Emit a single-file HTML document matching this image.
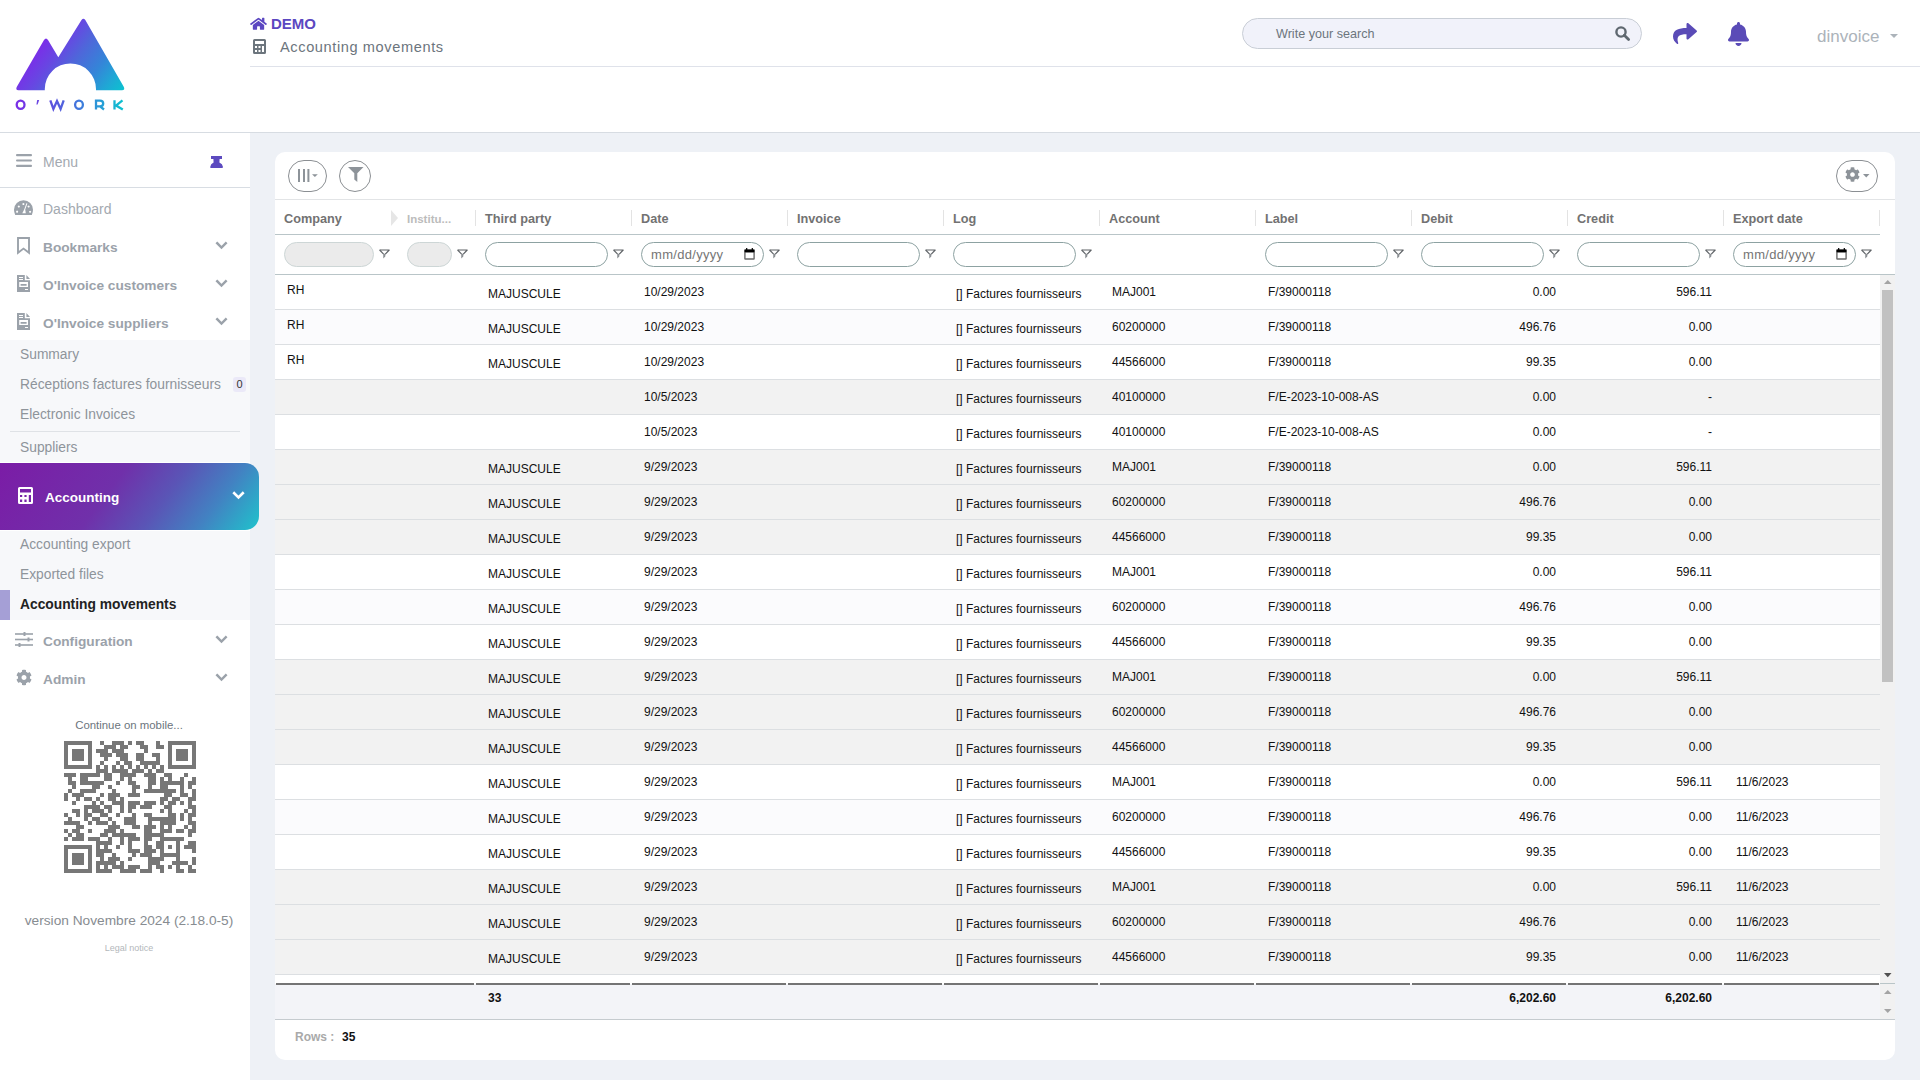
<!DOCTYPE html><html><head><meta charset="utf-8"><title>Accounting movements</title><style>
*{box-sizing:border-box;margin:0;padding:0}
html,body{width:1920px;height:1080px;overflow:hidden;background:#eef1f6;font-family:"Liberation Sans", sans-serif;}
.a{position:absolute;white-space:nowrap}
svg{position:absolute;overflow:visible}
.sb{color:#9ba2aa;font-weight:bold;font-size:13.7px;line-height:16px}
.sub{color:#8e949a;font-size:13.8px;line-height:16px}
.hd{font-weight:bold;font-size:12.7px;line-height:15px;color:#727272}
.sep{position:absolute;width:1px;height:16px;top:210px;background:#e3e3e3}
.inp{position:absolute;top:242px;height:25px;border:1px solid #8da2a2;border-radius:13px;background:#fff}
.inp.dis{background:#ebebeb;border-color:#cdd6d6}
.row{position:absolute;left:275px;width:1605px;height:35px;border-bottom:1px solid #dcdfe2}
.c{position:absolute;font-size:12px;line-height:14px;color:#111;white-space:nowrap}
.r{text-align:right}
</style></head><body>
<div class="a" style="left:0;top:0;width:1920px;height:133px;background:#fff;border-bottom:1px solid #d7dce2"></div>
<div class="a" style="left:250px;top:66px;width:1670px;height:1px;background:#dfe2ea"></div>
<svg style="left:0;top:0" width="140" height="120" viewBox="0 0 140 120">
<defs><linearGradient id="lg" x1="30" y1="20" x2="125" y2="92" gradientUnits="userSpaceOnUse">
<stop offset="0" stop-color="#8228ea"/><stop offset="0.2" stop-color="#7a2ee8"/><stop offset="0.35" stop-color="#6747e2"/><stop offset="0.5" stop-color="#4f66da"/><stop offset="0.7" stop-color="#3485d8"/><stop offset="0.85" stop-color="#1fa8d5"/><stop offset="1" stop-color="#08c6cf"/></linearGradient>
<linearGradient id="lt" x1="16" y1="0" x2="124" y2="0" gradientUnits="userSpaceOnUse">
<stop offset="0" stop-color="#7a2ee6"/><stop offset="0.35" stop-color="#5a55de"/><stop offset="0.6" stop-color="#3f7bdc"/><stop offset="1" stop-color="#0bc3cf"/></linearGradient></defs>
<path fill="url(#lg)" d="M18.5 90.2 Q15 90 17 86.5 L44 40 Q46 37 48 40 L58.3 57.3 L81.5 20 Q83.4 17.5 85.3 20 L123.6 86.5 Q125.5 90 122 90.2 L96 90.2 L96 89 A25.6 25.6 0 0 0 44.8 89 L44.8 90.2 Z"/>
<g fill="none" stroke="url(#lt)" stroke-width="2.3">
<ellipse cx="20.6" cy="104.7" rx="3.9" ry="4.1"/>
<ellipse cx="79" cy="104.7" rx="3.9" ry="4.1"/>
<path d="M50.3 100.3 L53.4 109 L57 101 L60.6 109 L63.7 100.3"/>
<path d="M96 109.5 V100.6 H100 Q103.2 100.6 103.2 103.6 Q103.2 106.4 100 106.4 H96 M100 106.4 L104 109.5"/>
<path d="M114.5 100.3 V109.5 M122.5 100.3 L116 105.5 L122.8 109.6"/>
</g>
<path d="M37.2 100 L39.2 100 L37.6 104.6 L36.4 104.6 Z" fill="#6a45e2"/>
</svg>
<svg style="left:250px;top:16.5px" width="17" height="13.5" viewBox="0 0 576 512" preserveAspectRatio="none"><path fill="#5b47c1" d="M280.37 148.26L96 300.11V464a16 16 0 0 0 16 16l112.06-.29a16 16 0 0 0 15.92-16V368a16 16 0 0 1 16-16h64a16 16 0 0 1 16 16v95.64a16 16 0 0 0 16 16.05L464 480a16 16 0 0 0 16-16V300L295.67 148.26a12.19 12.19 0 0 0-15.3 0zM571.6 251.47L488 182.56V44.05a12 12 0 0 0-12-12h-56a12 12 0 0 0-12 12v72.61L318.47 43a48 48 0 0 0-61 0L4.34 251.47a12 12 0 0 0-1.6 16.9l25.5 31A12 12 0 0 0 45.15 301l235.22-193.74a12.19 12.19 0 0 1 15.3 0L530.9 301a12 12 0 0 0 16.9-1.6l25.5-31a12 12 0 0 0-1.7-16.93z"/></svg>
<div class="a" style="left:271px;top:15px;font-size:15px;line-height:18px;font-weight:bold;color:#5b47c1">DEMO</div>
<svg style="left:253px;top:39px" width="13" height="15" viewBox="0 0 13 15"><path fill="#6c757d" fill-rule="evenodd" d="M1.5 0H11.5Q13 0 13 1.5V13.5Q13 15 11.5 15H1.5Q0 15 0 13.5V1.5Q0 0 1.5 0ZM2 2V5H11V2ZM2 7V9H4V7ZM5.5 7V9H7.5V7ZM9 7V13H11V7ZM2 11V13H4V11ZM5.5 11V13H7.5V11Z"/></svg>
<div class="a" style="left:280px;top:38px;font-size:14.6px;letter-spacing:0.6px;line-height:18px;color:#6c757d">Accounting movements</div>
<div class="a" style="left:1242px;top:18px;width:400px;height:31px;background:#f1f2fa;border:1px solid #c9ced6;border-radius:16px"></div>
<div class="a" style="left:1276px;top:27px;font-size:12.6px;line-height:15px;color:#6c757d">Write your search</div>
<svg style="left:1615px;top:26px" width="15" height="15" viewBox="0 0 15 15"><circle cx="6" cy="6" r="4.6" fill="none" stroke="#5f6870" stroke-width="2.4"/><path d="M9.3 9.3L13.6 13.6" stroke="#5f6870" stroke-width="2.8" stroke-linecap="round"/></svg>
<svg style="left:1673px;top:23px" width="24" height="21" viewBox="0 0 512 448"><path fill="#5a4bb7" d="M503.691 189.836L327.687 37.851C312.281 24.546 288 35.347 288 56.015v80.053C127.371 137.907 0 170.1 0 322.326c0 61.441 39.581 122.309 83.333 154.132 13.653 9.931 33.111-2.533 28.077-18.631C66.066 312.814 132.917 274.316 288 272.085V360c0 20.7 24.3 31.453 39.687 18.164l176.004-152c11.071-9.562 11.086-26.753 0-36.328z" transform="translate(0,-32)"/></svg>
<svg style="left:1728px;top:22px" width="21" height="24" viewBox="0 0 448 512"><path fill="#5a4bb7" d="M224 512c35.32 0 63.97-28.65 63.97-64H160.03c0 35.35 28.65 64 63.97 64zm215.39-149.71c-19.32-20.76-55.47-51.99-55.47-154.29 0-77.7-54.48-139.9-127.94-155.160V32c0-17.67-14.32-32-31.98-32s-31.98 14.33-31.980 32v20.84C118.56 68.1 64.08 130.3 64.08 208c0 102.3-36.15 133.53-55.47 154.290-6 6.45-8.66 14.16-8.61 21.710.11 16.4 12.98 32 32.1 32h383.8c19.12 0 32-15.6 32.1-32 .05-7.55-2.61-15.27-8.61-21.71z"/></svg>
<div class="a" style="left:1817px;top:27px;font-size:17px;line-height:20px;color:#acb3ba">dinvoice</div>
<svg style="left:1890px;top:34px" width="8" height="4" viewBox="0 0 8 4"><path d="M0 0H8L4 4Z" fill="#acb3ba"/></svg>
<div class="a" style="left:0;top:133px;width:250px;height:947px;background:#fff"></div>
<div class="a" style="left:0;top:187px;width:250px;height:1px;background:#d8dde3"></div>
<svg style="left:16px;top:154px" width="16" height="13" viewBox="0 0 16 13"><rect y="0" width="16" height="2.2" rx="1" fill="#9ba2aa"/><rect y="5.4" width="16" height="2.2" rx="1" fill="#9ba2aa"/><rect y="10.8" width="16" height="2.2" rx="1" fill="#9ba2aa"/></svg>
<div class="a" style="left:43px;top:154px;font-size:14px;line-height:16px;color:#a3a9b0">Menu</div>
<svg style="left:210px;top:156px" width="13" height="12" viewBox="0 0 13 12"><path fill="#5c4abf" d="M1 0H12V3H9.6L9.4 6.6Q12.6 8 13 11Q13 12 12 12H1Q0 12 0.2 11Q0.6 8 3.6 6.6L3.4 3H1Z"/></svg>
<svg style="left:14px;top:200px" width="19" height="15" viewBox="0 0 19 15"><path fill="#9ba2aa" fill-rule="evenodd" d="M9.5 0.2A9.5 9.5 0 0 0 0 9.7Q0 12.5 1.2 15H17.8Q19 12.5 19 9.7A9.5 9.5 0 0 0 9.5 0.2ZM3.1 10.6A1.05 1.05 0 1 0 3.11 10.6ZM4.8 5.4A1.05 1.05 0 1 0 4.81 5.4ZM9.4 3A1.05 1.05 0 1 0 9.41 3ZM14.6 5.4A1.05 1.05 0 1 0 14.61 5.4ZM16.1 10.7A1.05 1.05 0 1 0 16.11 10.7ZM12.4 3.2L10.2 9.4L8.3 13.2H11.8L11.2 9.6L13.4 3.4Z"/></svg>
<div class="a sub" style="left:43px;top:201px;font-size:14px;color:#a3a9b0">Dashboard</div>
<svg style="left:17px;top:237px" width="13" height="17" viewBox="0 0 13 17"><path d="M1 1H12V15.8L6.5 11.6L1 15.8Z" fill="none" stroke="#9ba2aa" stroke-width="1.9" stroke-linejoin="miter"/></svg>
<div class="a sb" style="left:43px;top:240px">Bookmarks</div>
<svg style="left:216px;top:242px" width="11" height="7" viewBox="0 0 11 7"><path d="M1.2 1.2L5.5 5.5L9.8 1.2" fill="none" stroke="#9ba2aa" stroke-width="2.4" stroke-linecap="square"/></svg>
<svg style="left:17px;top:275px" width="13" height="17" viewBox="0 0 13 17"><path fill="#9ba2aa" fill-rule="evenodd" d="M0 0H7.8V5.3H13V17H0ZM2 1.9V2.9H6V1.9ZM2 4.1V5.1H6V4.1ZM2.2 7V12H11V7ZM8 14.1V15H11V14.1Z"/><path fill="#9ba2aa" d="M3.6 8.9H9.6V10.8H3.6ZM9.4 0L13 4H9.4Z"/></svg>
<div class="a sb" style="left:43px;top:278px">O'Invoice customers</div>
<svg style="left:216px;top:280px" width="11" height="7" viewBox="0 0 11 7"><path d="M1.2 1.2L5.5 5.5L9.8 1.2" fill="none" stroke="#9ba2aa" stroke-width="2.4" stroke-linecap="square"/></svg>
<svg style="left:17px;top:313px" width="13" height="17" viewBox="0 0 13 17"><path fill="#9ba2aa" fill-rule="evenodd" d="M0 0H7.8V5.3H13V17H0ZM2 1.9V2.9H6V1.9ZM2 4.1V5.1H6V4.1ZM2.2 7V12H11V7ZM8 14.1V15H11V14.1Z"/><path fill="#9ba2aa" d="M3.6 8.9H9.6V10.8H3.6ZM9.4 0L13 4H9.4Z"/></svg>
<div class="a sb" style="left:43px;top:316px">O'Invoice suppliers</div>
<svg style="left:216px;top:318px" width="11" height="7" viewBox="0 0 11 7"><path d="M1.2 1.2L5.5 5.5L9.8 1.2" fill="none" stroke="#9ba2aa" stroke-width="2.4" stroke-linecap="square"/></svg>
<div class="a" style="left:0;top:340px;width:250px;height:122px;background:#f7f8fa"></div>
<div class="a sub" style="left:20px;top:347px">Summary</div>
<div class="a sub" style="left:20px;top:377px">Réceptions factures fournisseurs</div>
<div class="a" style="left:233px;top:377px;width:13px;height:15px;background:#ebe9f8;border-radius:3px;font-size:11px;line-height:15px;text-align:center;color:#333">0</div>
<div class="a sub" style="left:20px;top:407px">Electronic Invoices</div>
<div class="a" style="left:10px;top:431px;width:230px;height:1px;background:#dfe2e6"></div>
<div class="a sub" style="left:20px;top:440px">Suppliers</div>
<div class="a" style="left:0;top:463px;width:259px;height:67px;border-radius:0 14px 14px 0;background:linear-gradient(127deg,#7b1ca6 0%,#7030aa 42%,#5a55b6 62%,#4282c2 80%,#1fc3cc 100%)"></div>
<svg style="left:18px;top:487px" width="15" height="17" viewBox="0 0 15 17"><path fill="#fff" fill-rule="evenodd" d="M1.5 0H13.5Q15 0 15 1.5V15.5Q15 17 13.5 17H1.5Q0 17 0 15.5V1.5Q0 0 1.5 0ZM2 2V5.5H13V2ZM2 8V10H4.2V8ZM6.4 8V10H8.6V8ZM10.8 8V15H13V8ZM2 12.5V15H4.2V12.5ZM6.4 12.5V15H8.6V12.5Z"/></svg>
<div class="a" style="left:45px;top:490px;font-size:13.5px;line-height:16px;font-weight:bold;color:#fff">Accounting</div>
<svg style="left:233px;top:492px" width="11" height="7" viewBox="0 0 11 7"><path d="M1.2 1.2L5.5 5.5L9.8 1.2" fill="none" stroke="#fff" stroke-width="2.6" stroke-linecap="square"/></svg>
<div class="a" style="left:0;top:531px;width:250px;height:89px;background:#f7f8fa"></div>
<div class="a sub" style="left:20px;top:537px">Accounting export</div>
<div class="a sub" style="left:20px;top:567px">Exported files</div>
<div class="a" style="left:0;top:590px;width:10px;height:30px;background:#a59fd6"></div>
<div class="a" style="left:20px;top:597px;font-size:13.8px;line-height:16px;font-weight:bold;color:#222">Accounting movements</div>
<svg style="left:15px;top:632px" width="18" height="15" viewBox="0 0 18 15"><g fill="#9ba2aa"><rect x="0" y="1.2" width="18" height="1.6"/><rect x="0" y="6.7" width="18" height="1.6"/><rect x="0" y="12.2" width="18" height="1.6"/><rect x="8.5" y="0" width="2" height="4"/><rect x="12.5" y="5.5" width="2" height="4"/><rect x="3.5" y="11" width="2" height="4"/></g></svg>
<div class="a sb" style="left:43px;top:634px">Configuration</div>
<svg style="left:216px;top:636px" width="11" height="7" viewBox="0 0 11 7"><path d="M1.2 1.2L5.5 5.5L9.8 1.2" fill="none" stroke="#9ba2aa" stroke-width="2.4" stroke-linecap="square"/></svg>
<svg style="left:16px;top:669px" width="16" height="17" viewBox="0 0 512 512"><path fill="#9ba2aa" d="M487.4 315.7l-42.6-24.6c4.3-23.2 4.3-47 0-70.2l42.6-24.6c4.9-2.8 7.1-8.6 5.5-14-11.1-35.6-30-67.8-54.7-94.6-3.8-4.1-10-5.1-14.8-2.3L380.8 110c-17.9-15.4-38.5-27.3-60.8-35.1V25.8c0-5.6-3.9-10.5-9.4-11.7-36.7-8.2-74.3-7.8-109.2 0-5.5 1.2-9.4 6.1-9.4 11.7V75c-22.2 7.9-42.8 19.8-60.8 35.1L88.700 85.5c-4.9-2.8-11-1.9-14.8 2.3-24.7 26.7-43.6 58.9-54.7 94.6-1.7 5.4.6 11.2 5.5 14L67.3 221c-4.3 23.2-4.3 47 0 70.2l-42.6 24.6c-4.9 2.8-7.1 8.6-5.5 14 11.1 35.6 30 67.8 54.7 94.6 3.8 4.1 10 5.1 14.8 2.3l42.6-24.6c17.9 15.4 38.5 27.3 60.8 35.1v49.2c0 5.6 3.9 10.5 9.4 11.7 36.7 8.2 74.3 7.8 109.2 0 5.5-1.2 9.4-6.1 9.4-11.7v-49.2c22.2-7.9 42.8-19.8 60.8-35.1l42.6 24.6c4.9 2.8 11 1.9 14.8-2.3 24.7-26.7 43.6-58.9 54.7-94.6 1.5-5.5-.7-11.3-5.6-14.1zM256 336c-44.1 0-80-35.9-80-80s35.9-80 80-80 80 35.9 80 80-35.9 80-80 80z"/></svg>
<div class="a sb" style="left:43px;top:671.5px">Admin</div>
<svg style="left:216px;top:674px" width="11" height="7" viewBox="0 0 11 7"><path d="M1.2 1.2L5.5 5.5L9.8 1.2" fill="none" stroke="#9ba2aa" stroke-width="2.4" stroke-linecap="square"/></svg>
<div class="a" style="left:0;top:718.5px;width:258px;text-align:center;font-size:11.4px;line-height:13px;color:#6c757d">Continue on mobile...</div>
<svg style="left:64px;top:741px" width="132" height="132" viewBox="0 0 33 33" shape-rendering="crispEdges"><path fill="#777" d="M0 0h7v1h-7zM9 0h1v1h-1zM12 0h3v1h-3zM16 0h1v1h-1zM18 0h2v1h-2zM23 0h1v1h-1zM26 0h7v1h-7zM0 1h1v1h-1zM6 1h1v1h-1zM10 1h3v1h-3zM14 1h2v1h-2zM19 1h2v1h-2zM23 1h2v1h-2zM26 1h1v1h-1zM32 1h1v1h-1zM0 2h1v1h-1zM2 2h3v1h-3zM6 2h1v1h-1zM8 2h3v1h-3zM12 2h3v1h-3zM20 2h1v1h-1zM26 2h1v1h-1zM28 2h3v1h-3zM32 2h1v1h-1zM0 3h1v1h-1zM2 3h3v1h-3zM6 3h1v1h-1zM9 3h3v1h-3zM13 3h3v1h-3zM18 3h2v1h-2zM22 3h2v1h-2zM26 3h1v1h-1zM28 3h3v1h-3zM32 3h1v1h-1zM0 4h1v1h-1zM2 4h3v1h-3zM6 4h1v1h-1zM10 4h1v1h-1zM14 4h2v1h-2zM18 4h2v1h-2zM23 4h1v1h-1zM26 4h1v1h-1zM28 4h3v1h-3zM32 4h1v1h-1zM0 5h1v1h-1zM6 5h1v1h-1zM9 5h1v1h-1zM13 5h1v1h-1zM15 5h2v1h-2zM19 5h5v1h-5zM26 5h1v1h-1zM32 5h1v1h-1zM0 6h7v1h-7zM8 6h1v1h-1zM10 6h1v1h-1zM12 6h1v1h-1zM14 6h1v1h-1zM16 6h1v1h-1zM18 6h1v1h-1zM20 6h1v1h-1zM22 6h1v1h-1zM24 6h1v1h-1zM26 6h7v1h-7zM8 7h3v1h-3zM12 7h4v1h-4zM17 7h3v1h-3zM21 7h1v1h-1zM23 7h2v1h-2zM0 8h3v1h-3zM4 8h5v1h-5zM10 8h2v1h-2zM14 8h4v1h-4zM20 8h3v1h-3zM25 8h2v1h-2zM30 8h1v1h-1zM1 9h1v1h-1zM4 9h2v1h-2zM10 9h2v1h-2zM14 9h1v1h-1zM16 9h1v1h-1zM21 9h2v1h-2zM24 9h1v1h-1zM26 9h1v1h-1zM29 9h1v1h-1zM32 9h1v1h-1zM1 10h2v1h-2zM4 10h6v1h-6zM13 10h1v1h-1zM16 10h2v1h-2zM21 10h2v1h-2zM24 10h6v1h-6zM31 10h2v1h-2zM2 11h1v1h-1zM7 11h2v1h-2zM11 11h1v1h-1zM17 11h2v1h-2zM21 11h1v1h-1zM24 11h2v1h-2zM29 11h1v1h-1zM31 11h1v1h-1zM1 12h1v1h-1zM4 12h4v1h-4zM12 12h1v1h-1zM17 12h1v1h-1zM20 12h8v1h-8zM29 12h1v1h-1zM32 12h1v1h-1zM0 13h1v1h-1zM2 13h3v1h-3zM9 13h1v1h-1zM11 13h3v1h-3zM16 13h3v1h-3zM25 13h2v1h-2zM29 13h2v1h-2zM32 13h1v1h-1zM0 14h1v1h-1zM3 14h1v1h-1zM5 14h2v1h-2zM8 14h1v1h-1zM11 14h2v1h-2zM14 14h1v1h-1zM24 14h2v1h-2zM27 14h2v1h-2zM31 14h2v1h-2zM2 15h1v1h-1zM7 15h1v1h-1zM9 15h1v1h-1zM12 15h3v1h-3zM16 15h3v1h-3zM20 15h3v1h-3zM24 15h1v1h-1zM26 15h2v1h-2zM29 15h1v1h-1zM31 15h1v1h-1zM5 16h4v1h-4zM10 16h2v1h-2zM14 16h1v1h-1zM16 16h2v1h-2zM19 16h3v1h-3zM25 16h2v1h-2zM31 16h2v1h-2zM2 17h2v1h-2zM5 17h1v1h-1zM7 17h3v1h-3zM11 17h1v1h-1zM14 17h1v1h-1zM16 17h1v1h-1zM24 17h1v1h-1zM26 17h1v1h-1zM30 17h1v1h-1zM32 17h1v1h-1zM0 18h1v1h-1zM3 18h1v1h-1zM5 18h2v1h-2zM9 18h2v1h-2zM13 18h1v1h-1zM17 18h1v1h-1zM20 18h2v1h-2zM26 18h2v1h-2zM29 18h1v1h-1zM31 18h2v1h-2zM1 19h1v1h-1zM5 19h1v1h-1zM7 19h2v1h-2zM11 19h1v1h-1zM15 19h3v1h-3zM21 19h7v1h-7zM29 19h1v1h-1zM31 19h1v1h-1zM0 20h4v1h-4zM6 20h1v1h-1zM8 20h3v1h-3zM12 20h1v1h-1zM15 20h3v1h-3zM21 20h1v1h-1zM24 20h4v1h-4zM31 20h2v1h-2zM3 21h2v1h-2zM11 21h3v1h-3zM17 21h2v1h-2zM20 21h3v1h-3zM24 21h1v1h-1zM26 21h1v1h-1zM30 21h1v1h-1zM32 21h1v1h-1zM0 22h1v1h-1zM2 22h2v1h-2zM6 22h1v1h-1zM10 22h3v1h-3zM14 22h1v1h-1zM20 22h2v1h-2zM24 22h3v1h-3zM28 22h2v1h-2zM31 22h2v1h-2zM1 23h1v1h-1zM3 23h2v1h-2zM9 23h2v1h-2zM12 23h6v1h-6zM20 23h5v1h-5zM31 23h1v1h-1zM0 24h1v1h-1zM2 24h3v1h-3zM6 24h3v1h-3zM11 24h1v1h-1zM14 24h1v1h-1zM16 24h3v1h-3zM20 24h2v1h-2zM24 24h6v1h-6zM8 25h4v1h-4zM14 25h1v1h-1zM16 25h1v1h-1zM20 25h1v1h-1zM23 25h2v1h-2zM28 25h1v1h-1zM31 25h2v1h-2zM0 26h7v1h-7zM8 26h1v1h-1zM10 26h1v1h-1zM13 26h1v1h-1zM16 26h1v1h-1zM20 26h2v1h-2zM23 26h2v1h-2zM26 26h1v1h-1zM28 26h1v1h-1zM30 26h3v1h-3zM0 27h1v1h-1zM6 27h1v1h-1zM8 27h4v1h-4zM16 27h3v1h-3zM20 27h3v1h-3zM24 27h1v1h-1zM28 27h1v1h-1zM32 27h1v1h-1zM0 28h1v1h-1zM2 28h3v1h-3zM6 28h1v1h-1zM8 28h2v1h-2zM12 28h1v1h-1zM17 28h1v1h-1zM19 28h3v1h-3zM24 28h5v1h-5zM0 29h1v1h-1zM2 29h3v1h-3zM6 29h1v1h-1zM9 29h1v1h-1zM11 29h3v1h-3zM16 29h1v1h-1zM21 29h4v1h-4zM28 29h1v1h-1zM32 29h1v1h-1zM0 30h1v1h-1zM2 30h3v1h-3zM6 30h1v1h-1zM8 30h5v1h-5zM14 30h1v1h-1zM21 30h3v1h-3zM27 30h4v1h-4zM32 30h1v1h-1zM0 31h1v1h-1zM6 31h1v1h-1zM8 31h1v1h-1zM10 31h1v1h-1zM12 31h3v1h-3zM16 31h3v1h-3zM21 31h1v1h-1zM23 31h2v1h-2zM26 31h1v1h-1zM28 31h1v1h-1zM31 31h1v1h-1zM0 32h7v1h-7zM8 32h4v1h-4zM14 32h4v1h-4zM19 32h3v1h-3zM24 32h1v1h-1zM28 32h2v1h-2zM31 32h2v1h-2z"/></svg>
<div class="a" style="left:0;top:913px;width:258px;text-align:center;font-size:13.7px;line-height:16px;color:#878c91">version Novembre 2024 (2.18.0-5)</div>
<div class="a" style="left:0;top:942.5px;width:258px;text-align:center;font-size:9px;line-height:11px;color:#b3b7bb">Legal notice</div>
<div class="a" style="left:275px;top:152px;width:1620px;height:908px;background:#fff;border-radius:10px"></div>
<div class="a" style="left:275px;top:199px;width:1620px;height:1px;background:#e2e4e6"></div>
<div class="a" style="left:288px;top:160px;width:39px;height:32px;border:1px solid #8b8f93;border-radius:16px"></div>
<svg style="left:298px;top:169px" width="22" height="13" viewBox="0 0 22 13"><g fill="#8d9399"><rect x="0" y="0" width="2" height="13"/><rect x="5" y="0" width="2" height="13"/><rect x="9.4" y="0" width="2" height="13"/><path d="M14 5.2H19.8L16.9 8Z"/></g></svg>
<div class="a" style="left:339px;top:160px;width:32px;height:32px;border:1px solid #8b8f93;border-radius:16px"></div>
<svg style="left:348px;top:167px" width="16" height="15" viewBox="0 0 16 15"><path fill="#8d9399" d="M0 0H15.5L9.3 6.3V15L6.3 12.5V6.3Z"/></svg>
<div class="a" style="left:1836px;top:160px;width:42px;height:32px;border:1px solid #8b8f93;border-radius:16px"></div>
<svg style="left:1845px;top:167px" width="15" height="15" viewBox="0 0 512 512"><path fill="#8d9399" d="M487.4 315.7l-42.6-24.6c4.3-23.2 4.3-47 0-70.2l42.6-24.6c4.9-2.8 7.1-8.6 5.5-14-11.1-35.6-30-67.8-54.7-94.6-3.8-4.1-10-5.1-14.8-2.3L380.8 110c-17.9-15.4-38.5-27.3-60.8-35.1V25.8c0-5.6-3.9-10.5-9.4-11.7-36.7-8.2-74.3-7.8-109.2 0-5.5 1.2-9.4 6.1-9.4 11.7V75c-22.2 7.9-42.8 19.8-60.8 35.1L88.7 85.5c-4.9-2.8-11-1.9-14.8 2.3-24.7 26.7-43.6 58.9-54.7 94.6-1.7 5.4.6 11.2 5.5 14L67.3 221c-4.3 23.2-4.3 47 0 70.2l-42.6 24.6c-4.9 2.8-7.1 8.6-5.5 14 11.1 35.6 30 67.8 54.7 94.6 3.8 4.1 10 5.1 14.8 2.3l42.6-24.6c17.9 15.4 38.5 27.3 60.8 35.1v49.2c0 5.6 3.9 10.5 9.4 11.7 36.7 8.2 74.3 7.8 109.2 0 5.5-1.2 9.4-6.1 9.4-11.7v-49.2c22.2-7.9 42.8-19.8 60.8-35.1l42.6 24.6c4.9 2.8 11 1.9 14.8-2.3 24.7-26.7 43.6-58.9 54.7-94.6 1.5-5.5-.7-11.3-5.6-14.1zM256 336c-44.1 0-80-35.9-80-80s35.9-80 80-80 80 35.9 80 80-35.9 80-80 80z"/></svg>
<svg style="left:1863px;top:174px" width="7" height="4" viewBox="0 0 7 4"><path d="M0 0H6.5L3.25 3.4Z" fill="#8d9399"/></svg>
<div class="a" style="left:275px;top:234px;width:1605px;height:1px;background:#b9c5c8"></div>
<div class="a" style="left:275px;top:274px;width:1620px;height:1px;background:#b9c5c8"></div>
<div class="a hd" style="left:284px;top:212px">Company</div>
<div class="inp dis" style="left:284px;width:90px"></div>
<svg style="left:379px;top:249px" width="11" height="11" viewBox="0 0 11 11"><path d="M0.6 1H10.2L6.3 5.2" fill="none" stroke="#5e6266" stroke-width="1.2" stroke-linejoin="round"/><path d="M0.6 1L4.6 5.2" fill="none" stroke="#5e6266" stroke-width="1.2"/><path d="M4.2 4.6L6.6 4.9L6.2 7.4L4.3 9.4Z" fill="#8a8e92"/></svg>
<div class="a" style="left:407px;top:212px;font-size:11.5px;line-height:14px;font-weight:bold;color:#bcbcbc">Institu...</div>
<div class="inp dis" style="left:407px;width:45px"></div>
<svg style="left:457px;top:249px" width="11" height="11" viewBox="0 0 11 11"><path d="M0.6 1H10.2L6.3 5.2" fill="none" stroke="#5e6266" stroke-width="1.2" stroke-linejoin="round"/><path d="M0.6 1L4.6 5.2" fill="none" stroke="#5e6266" stroke-width="1.2"/><path d="M4.2 4.6L6.6 4.9L6.2 7.4L4.3 9.4Z" fill="#8a8e92"/></svg>
<div class="sep" style="left:475px"></div>
<div class="a hd" style="left:485px;top:212px">Third party</div>
<div class="inp" style="left:485px;width:123px"></div>
<svg style="left:613px;top:249px" width="11" height="11" viewBox="0 0 11 11"><path d="M0.6 1H10.2L6.3 5.2" fill="none" stroke="#5e6266" stroke-width="1.2" stroke-linejoin="round"/><path d="M0.6 1L4.6 5.2" fill="none" stroke="#5e6266" stroke-width="1.2"/><path d="M4.2 4.6L6.6 4.9L6.2 7.4L4.3 9.4Z" fill="#8a8e92"/></svg>
<div class="sep" style="left:631px"></div>
<div class="a hd" style="left:641px;top:212px">Date</div>
<div class="inp" style="left:641px;width:123px"></div>
<div class="a" style="left:651px;top:247px;font-size:13px;letter-spacing:0.3px;line-height:15px;color:#757575">mm/dd/yyyy</div>
<svg style="left:744px;top:248px" width="11" height="12" viewBox="0 0 11 12"><path fill="#6a6a6a" fill-rule="evenodd" d="M1 1.6H10Q10.8 1.6 10.8 2.4V10.8Q10.8 11.8 9.8 11.8H1.2Q0.2 11.8 0.2 10.8V2.4Q0.2 1.6 1 1.6ZM1.6 4.4V10.3H9.4V4.4Z"/><path fill="#000" d="M0.6 1.5H10.4V4.2H0.6ZM2.1 0H3.3V2H2.1ZM7.7 0H8.9V2H7.7Z"/></svg>
<svg style="left:769px;top:249px" width="11" height="11" viewBox="0 0 11 11"><path d="M0.6 1H10.2L6.3 5.2" fill="none" stroke="#5e6266" stroke-width="1.2" stroke-linejoin="round"/><path d="M0.6 1L4.6 5.2" fill="none" stroke="#5e6266" stroke-width="1.2"/><path d="M4.2 4.6L6.6 4.9L6.2 7.4L4.3 9.4Z" fill="#8a8e92"/></svg>
<div class="sep" style="left:787px"></div>
<div class="a hd" style="left:797px;top:212px">Invoice</div>
<div class="inp" style="left:797px;width:123px"></div>
<svg style="left:925px;top:249px" width="11" height="11" viewBox="0 0 11 11"><path d="M0.6 1H10.2L6.3 5.2" fill="none" stroke="#5e6266" stroke-width="1.2" stroke-linejoin="round"/><path d="M0.6 1L4.6 5.2" fill="none" stroke="#5e6266" stroke-width="1.2"/><path d="M4.2 4.6L6.6 4.9L6.2 7.4L4.3 9.4Z" fill="#8a8e92"/></svg>
<div class="sep" style="left:943px"></div>
<div class="a hd" style="left:953px;top:212px">Log</div>
<div class="inp" style="left:953px;width:123px"></div>
<svg style="left:1081px;top:249px" width="11" height="11" viewBox="0 0 11 11"><path d="M0.6 1H10.2L6.3 5.2" fill="none" stroke="#5e6266" stroke-width="1.2" stroke-linejoin="round"/><path d="M0.6 1L4.6 5.2" fill="none" stroke="#5e6266" stroke-width="1.2"/><path d="M4.2 4.6L6.6 4.9L6.2 7.4L4.3 9.4Z" fill="#8a8e92"/></svg>
<div class="sep" style="left:1099px"></div>
<div class="a hd" style="left:1109px;top:212px">Account</div>
<div class="sep" style="left:1255px"></div>
<div class="a hd" style="left:1265px;top:212px">Label</div>
<div class="inp" style="left:1265px;width:123px"></div>
<svg style="left:1393px;top:249px" width="11" height="11" viewBox="0 0 11 11"><path d="M0.6 1H10.2L6.3 5.2" fill="none" stroke="#5e6266" stroke-width="1.2" stroke-linejoin="round"/><path d="M0.6 1L4.6 5.2" fill="none" stroke="#5e6266" stroke-width="1.2"/><path d="M4.2 4.6L6.6 4.9L6.2 7.4L4.3 9.4Z" fill="#8a8e92"/></svg>
<div class="sep" style="left:1411px"></div>
<div class="a hd" style="left:1421px;top:212px">Debit</div>
<div class="inp" style="left:1421px;width:123px"></div>
<svg style="left:1549px;top:249px" width="11" height="11" viewBox="0 0 11 11"><path d="M0.6 1H10.2L6.3 5.2" fill="none" stroke="#5e6266" stroke-width="1.2" stroke-linejoin="round"/><path d="M0.6 1L4.6 5.2" fill="none" stroke="#5e6266" stroke-width="1.2"/><path d="M4.2 4.6L6.6 4.9L6.2 7.4L4.3 9.4Z" fill="#8a8e92"/></svg>
<div class="sep" style="left:1567px"></div>
<div class="a hd" style="left:1577px;top:212px">Credit</div>
<div class="inp" style="left:1577px;width:123px"></div>
<svg style="left:1705px;top:249px" width="11" height="11" viewBox="0 0 11 11"><path d="M0.6 1H10.2L6.3 5.2" fill="none" stroke="#5e6266" stroke-width="1.2" stroke-linejoin="round"/><path d="M0.6 1L4.6 5.2" fill="none" stroke="#5e6266" stroke-width="1.2"/><path d="M4.2 4.6L6.6 4.9L6.2 7.4L4.3 9.4Z" fill="#8a8e92"/></svg>
<div class="sep" style="left:1723px"></div>
<div class="a hd" style="left:1733px;top:212px">Export date</div>
<div class="inp" style="left:1733px;width:123px"></div>
<div class="a" style="left:1743px;top:247px;font-size:13px;letter-spacing:0.3px;line-height:15px;color:#757575">mm/dd/yyyy</div>
<svg style="left:1836px;top:248px" width="11" height="12" viewBox="0 0 11 12"><path fill="#6a6a6a" fill-rule="evenodd" d="M1 1.6H10Q10.8 1.6 10.8 2.4V10.8Q10.8 11.8 9.8 11.8H1.2Q0.2 11.8 0.2 10.8V2.4Q0.2 1.6 1 1.6ZM1.6 4.4V10.3H9.4V4.4Z"/><path fill="#000" d="M0.6 1.5H10.4V4.2H0.6ZM2.1 0H3.3V2H2.1ZM7.7 0H8.9V2H7.7Z"/></svg>
<svg style="left:1861px;top:249px" width="11" height="11" viewBox="0 0 11 11"><path d="M0.6 1H10.2L6.3 5.2" fill="none" stroke="#5e6266" stroke-width="1.2" stroke-linejoin="round"/><path d="M0.6 1L4.6 5.2" fill="none" stroke="#5e6266" stroke-width="1.2"/><path d="M4.2 4.6L6.6 4.9L6.2 7.4L4.3 9.4Z" fill="#8a8e92"/></svg>
<div class="sep" style="left:1879px"></div>
<svg style="left:391px;top:210px" width="8" height="16" viewBox="0 0 8 16"><path d="M0 0L7 8L0 16Z" fill="#e6e6e6"/></svg>
<div class="row" style="top:275px;background:#fff"></div>
<div class="c" style="left:287px;top:283px">RH</div>
<div class="c" style="left:488px;top:287px">MAJUSCULE</div>
<div class="c" style="left:644px;top:285px">10/29/2023</div>
<div class="c" style="left:956px;top:287px">[] Factures fournisseurs</div>
<div class="c" style="left:1112px;top:285px">MAJ001</div>
<div class="c" style="left:1268px;top:285px">F/39000118</div>
<div class="c r" style="left:1411px;width:145px;top:285px">0.00</div>
<div class="c r" style="left:1567px;width:145px;top:285px">596.11</div>
<div class="row" style="top:310px;background:#fbfbfd"></div>
<div class="c" style="left:287px;top:318px">RH</div>
<div class="c" style="left:488px;top:322px">MAJUSCULE</div>
<div class="c" style="left:644px;top:320px">10/29/2023</div>
<div class="c" style="left:956px;top:322px">[] Factures fournisseurs</div>
<div class="c" style="left:1112px;top:320px">60200000</div>
<div class="c" style="left:1268px;top:320px">F/39000118</div>
<div class="c r" style="left:1411px;width:145px;top:320px">496.76</div>
<div class="c r" style="left:1567px;width:145px;top:320px">0.00</div>
<div class="row" style="top:345px;background:#fff"></div>
<div class="c" style="left:287px;top:353px">RH</div>
<div class="c" style="left:488px;top:357px">MAJUSCULE</div>
<div class="c" style="left:644px;top:355px">10/29/2023</div>
<div class="c" style="left:956px;top:357px">[] Factures fournisseurs</div>
<div class="c" style="left:1112px;top:355px">44566000</div>
<div class="c" style="left:1268px;top:355px">F/39000118</div>
<div class="c r" style="left:1411px;width:145px;top:355px">99.35</div>
<div class="c r" style="left:1567px;width:145px;top:355px">0.00</div>
<div class="row" style="top:380px;background:#f2f2f2"></div>
<div class="c" style="left:644px;top:390px">10/5/2023</div>
<div class="c" style="left:956px;top:392px">[] Factures fournisseurs</div>
<div class="c" style="left:1112px;top:390px">40100000</div>
<div class="c" style="left:1268px;top:390px">F/E-2023-10-008-AS</div>
<div class="c r" style="left:1411px;width:145px;top:390px">0.00</div>
<div class="c r" style="left:1567px;width:145px;top:390px">-</div>
<div class="row" style="top:415px;background:#fff"></div>
<div class="c" style="left:644px;top:425px">10/5/2023</div>
<div class="c" style="left:956px;top:427px">[] Factures fournisseurs</div>
<div class="c" style="left:1112px;top:425px">40100000</div>
<div class="c" style="left:1268px;top:425px">F/E-2023-10-008-AS</div>
<div class="c r" style="left:1411px;width:145px;top:425px">0.00</div>
<div class="c r" style="left:1567px;width:145px;top:425px">-</div>
<div class="row" style="top:450px;background:#f2f2f2"></div>
<div class="c" style="left:488px;top:462px">MAJUSCULE</div>
<div class="c" style="left:644px;top:460px">9/29/2023</div>
<div class="c" style="left:956px;top:462px">[] Factures fournisseurs</div>
<div class="c" style="left:1112px;top:460px">MAJ001</div>
<div class="c" style="left:1268px;top:460px">F/39000118</div>
<div class="c r" style="left:1411px;width:145px;top:460px">0.00</div>
<div class="c r" style="left:1567px;width:145px;top:460px">596.11</div>
<div class="row" style="top:485px;background:#f2f2f2"></div>
<div class="c" style="left:488px;top:497px">MAJUSCULE</div>
<div class="c" style="left:644px;top:495px">9/29/2023</div>
<div class="c" style="left:956px;top:497px">[] Factures fournisseurs</div>
<div class="c" style="left:1112px;top:495px">60200000</div>
<div class="c" style="left:1268px;top:495px">F/39000118</div>
<div class="c r" style="left:1411px;width:145px;top:495px">496.76</div>
<div class="c r" style="left:1567px;width:145px;top:495px">0.00</div>
<div class="row" style="top:520px;background:#f2f2f2"></div>
<div class="c" style="left:488px;top:532px">MAJUSCULE</div>
<div class="c" style="left:644px;top:530px">9/29/2023</div>
<div class="c" style="left:956px;top:532px">[] Factures fournisseurs</div>
<div class="c" style="left:1112px;top:530px">44566000</div>
<div class="c" style="left:1268px;top:530px">F/39000118</div>
<div class="c r" style="left:1411px;width:145px;top:530px">99.35</div>
<div class="c r" style="left:1567px;width:145px;top:530px">0.00</div>
<div class="row" style="top:555px;background:#fff"></div>
<div class="c" style="left:488px;top:567px">MAJUSCULE</div>
<div class="c" style="left:644px;top:565px">9/29/2023</div>
<div class="c" style="left:956px;top:567px">[] Factures fournisseurs</div>
<div class="c" style="left:1112px;top:565px">MAJ001</div>
<div class="c" style="left:1268px;top:565px">F/39000118</div>
<div class="c r" style="left:1411px;width:145px;top:565px">0.00</div>
<div class="c r" style="left:1567px;width:145px;top:565px">596.11</div>
<div class="row" style="top:590px;background:#fbfbfd"></div>
<div class="c" style="left:488px;top:602px">MAJUSCULE</div>
<div class="c" style="left:644px;top:600px">9/29/2023</div>
<div class="c" style="left:956px;top:602px">[] Factures fournisseurs</div>
<div class="c" style="left:1112px;top:600px">60200000</div>
<div class="c" style="left:1268px;top:600px">F/39000118</div>
<div class="c r" style="left:1411px;width:145px;top:600px">496.76</div>
<div class="c r" style="left:1567px;width:145px;top:600px">0.00</div>
<div class="row" style="top:625px;background:#fff"></div>
<div class="c" style="left:488px;top:637px">MAJUSCULE</div>
<div class="c" style="left:644px;top:635px">9/29/2023</div>
<div class="c" style="left:956px;top:637px">[] Factures fournisseurs</div>
<div class="c" style="left:1112px;top:635px">44566000</div>
<div class="c" style="left:1268px;top:635px">F/39000118</div>
<div class="c r" style="left:1411px;width:145px;top:635px">99.35</div>
<div class="c r" style="left:1567px;width:145px;top:635px">0.00</div>
<div class="row" style="top:660px;background:#f2f2f2"></div>
<div class="c" style="left:488px;top:672px">MAJUSCULE</div>
<div class="c" style="left:644px;top:670px">9/29/2023</div>
<div class="c" style="left:956px;top:672px">[] Factures fournisseurs</div>
<div class="c" style="left:1112px;top:670px">MAJ001</div>
<div class="c" style="left:1268px;top:670px">F/39000118</div>
<div class="c r" style="left:1411px;width:145px;top:670px">0.00</div>
<div class="c r" style="left:1567px;width:145px;top:670px">596.11</div>
<div class="row" style="top:695px;background:#f2f2f2"></div>
<div class="c" style="left:488px;top:707px">MAJUSCULE</div>
<div class="c" style="left:644px;top:705px">9/29/2023</div>
<div class="c" style="left:956px;top:707px">[] Factures fournisseurs</div>
<div class="c" style="left:1112px;top:705px">60200000</div>
<div class="c" style="left:1268px;top:705px">F/39000118</div>
<div class="c r" style="left:1411px;width:145px;top:705px">496.76</div>
<div class="c r" style="left:1567px;width:145px;top:705px">0.00</div>
<div class="row" style="top:730px;background:#f2f2f2"></div>
<div class="c" style="left:488px;top:742px">MAJUSCULE</div>
<div class="c" style="left:644px;top:740px">9/29/2023</div>
<div class="c" style="left:956px;top:742px">[] Factures fournisseurs</div>
<div class="c" style="left:1112px;top:740px">44566000</div>
<div class="c" style="left:1268px;top:740px">F/39000118</div>
<div class="c r" style="left:1411px;width:145px;top:740px">99.35</div>
<div class="c r" style="left:1567px;width:145px;top:740px">0.00</div>
<div class="row" style="top:765px;background:#fff"></div>
<div class="c" style="left:488px;top:777px">MAJUSCULE</div>
<div class="c" style="left:644px;top:775px">9/29/2023</div>
<div class="c" style="left:956px;top:777px">[] Factures fournisseurs</div>
<div class="c" style="left:1112px;top:775px">MAJ001</div>
<div class="c" style="left:1268px;top:775px">F/39000118</div>
<div class="c r" style="left:1411px;width:145px;top:775px">0.00</div>
<div class="c r" style="left:1567px;width:145px;top:775px">596.11</div>
<div class="c" style="left:1736px;top:775px">11/6/2023</div>
<div class="row" style="top:800px;background:#fbfbfd"></div>
<div class="c" style="left:488px;top:812px">MAJUSCULE</div>
<div class="c" style="left:644px;top:810px">9/29/2023</div>
<div class="c" style="left:956px;top:812px">[] Factures fournisseurs</div>
<div class="c" style="left:1112px;top:810px">60200000</div>
<div class="c" style="left:1268px;top:810px">F/39000118</div>
<div class="c r" style="left:1411px;width:145px;top:810px">496.76</div>
<div class="c r" style="left:1567px;width:145px;top:810px">0.00</div>
<div class="c" style="left:1736px;top:810px">11/6/2023</div>
<div class="row" style="top:835px;background:#fff"></div>
<div class="c" style="left:488px;top:847px">MAJUSCULE</div>
<div class="c" style="left:644px;top:845px">9/29/2023</div>
<div class="c" style="left:956px;top:847px">[] Factures fournisseurs</div>
<div class="c" style="left:1112px;top:845px">44566000</div>
<div class="c" style="left:1268px;top:845px">F/39000118</div>
<div class="c r" style="left:1411px;width:145px;top:845px">99.35</div>
<div class="c r" style="left:1567px;width:145px;top:845px">0.00</div>
<div class="c" style="left:1736px;top:845px">11/6/2023</div>
<div class="row" style="top:870px;background:#f2f2f2"></div>
<div class="c" style="left:488px;top:882px">MAJUSCULE</div>
<div class="c" style="left:644px;top:880px">9/29/2023</div>
<div class="c" style="left:956px;top:882px">[] Factures fournisseurs</div>
<div class="c" style="left:1112px;top:880px">MAJ001</div>
<div class="c" style="left:1268px;top:880px">F/39000118</div>
<div class="c r" style="left:1411px;width:145px;top:880px">0.00</div>
<div class="c r" style="left:1567px;width:145px;top:880px">596.11</div>
<div class="c" style="left:1736px;top:880px">11/6/2023</div>
<div class="row" style="top:905px;background:#f2f2f2"></div>
<div class="c" style="left:488px;top:917px">MAJUSCULE</div>
<div class="c" style="left:644px;top:915px">9/29/2023</div>
<div class="c" style="left:956px;top:917px">[] Factures fournisseurs</div>
<div class="c" style="left:1112px;top:915px">60200000</div>
<div class="c" style="left:1268px;top:915px">F/39000118</div>
<div class="c r" style="left:1411px;width:145px;top:915px">496.76</div>
<div class="c r" style="left:1567px;width:145px;top:915px">0.00</div>
<div class="c" style="left:1736px;top:915px">11/6/2023</div>
<div class="row" style="top:940px;background:#f2f2f2"></div>
<div class="c" style="left:488px;top:952px">MAJUSCULE</div>
<div class="c" style="left:644px;top:950px">9/29/2023</div>
<div class="c" style="left:956px;top:952px">[] Factures fournisseurs</div>
<div class="c" style="left:1112px;top:950px">44566000</div>
<div class="c" style="left:1268px;top:950px">F/39000118</div>
<div class="c r" style="left:1411px;width:145px;top:950px">99.35</div>
<div class="c r" style="left:1567px;width:145px;top:950px">0.00</div>
<div class="c" style="left:1736px;top:950px">11/6/2023</div>
<div class="a" style="left:1880px;top:275px;width:15px;height:709px;background:#f1f1f1"></div>
<div class="a" style="left:1882px;top:290px;width:11px;height:392px;background:#c1c1c1"></div>
<svg style="left:1884px;top:280px" width="8" height="4" viewBox="0 0 8 4"><path d="M0 4H7.5L3.75 0Z" fill="#a3a3a3"/></svg>
<svg style="left:1884px;top:973px" width="8" height="5" viewBox="0 0 8 5"><path d="M0 0H7.5L3.75 4.2Z" fill="#505050"/></svg>
<div class="a" style="left:275px;top:975px;width:1605px;height:9px;background:#fff"></div>
<div class="a" style="left:275px;top:984px;width:1605px;height:35px;background:#f3f4f8"></div>
<div class="a" style="left:276px;top:983px;width:198px;height:2px;background:#747474"></div>
<div class="a" style="left:476px;top:983px;width:154px;height:2px;background:#747474"></div>
<div class="a" style="left:632px;top:983px;width:154px;height:2px;background:#747474"></div>
<div class="a" style="left:788px;top:983px;width:154px;height:2px;background:#747474"></div>
<div class="a" style="left:944px;top:983px;width:154px;height:2px;background:#747474"></div>
<div class="a" style="left:1100px;top:983px;width:154px;height:2px;background:#747474"></div>
<div class="a" style="left:1256px;top:983px;width:154px;height:2px;background:#747474"></div>
<div class="a" style="left:1412px;top:983px;width:154px;height:2px;background:#747474"></div>
<div class="a" style="left:1568px;top:983px;width:154px;height:2px;background:#747474"></div>
<div class="a" style="left:1724px;top:983px;width:155px;height:2px;background:#747474"></div>
<div class="a" style="left:1880px;top:983px;width:15px;height:1px;background:#b9c5c8"></div>
<div class="a" style="left:1880px;top:984px;width:15px;height:35px;background:#f1f1f1"></div>
<div class="a" style="left:275px;top:1019px;width:1620px;height:1px;background:#c5cbcf"></div>
<svg style="left:1884px;top:990px" width="8" height="4" viewBox="0 0 8 4"><path d="M0 4H7.5L3.75 0Z" fill="#a3a3a3"/></svg>
<svg style="left:1884px;top:1009px" width="8" height="4" viewBox="0 0 8 4"><path d="M0 0H7.5L3.75 4Z" fill="#a3a3a3"/></svg>
<div class="a" style="left:488px;top:991px;font-size:12px;line-height:14px;font-weight:bold;color:#111">33</div>
<div class="a" style="left:1411px;width:145px;top:991px;font-size:12px;line-height:14px;font-weight:bold;color:#111;text-align:right">6,202.60</div>
<div class="a" style="left:1567px;width:145px;top:991px;font-size:12px;line-height:14px;font-weight:bold;color:#111;text-align:right">6,202.60</div>
<div class="a" style="left:295px;top:1030px;font-size:12px;line-height:14px;font-weight:bold;color:#a9a9a9">Rows :</div>
<div class="a" style="left:342px;top:1030px;font-size:12px;line-height:14px;font-weight:bold;color:#111">35</div>
</body></html>
